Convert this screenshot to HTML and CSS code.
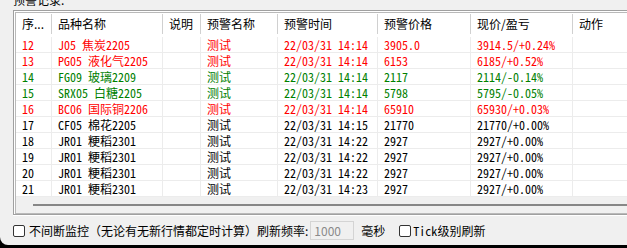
FILE: index.html
```html
<!DOCTYPE html>
<html lang="zh-CN">
<head>
<meta charset="UTF-8">
<title>预警记录</title>
<link rel="stylesheet" href="styles.css">
</head>
<body>
<div class="window">
  <div class="caption">预警记录:</div>
  <div class="group">
    <div class="list">
      <div class="row head">
        <div>序...</div><div>品种名称</div><div>说明</div><div>预警名称</div><div>预警时间</div><div>预警价格</div><div>现价/盈亏</div><div>动作</div>
      </div>
      <div class="row red">
        <div>12</div><div>J05 焦炭2205</div><div></div><div>测试</div><div>22/03/31 14:14</div><div>3905.0</div><div>3914.5/+0.24%</div><div></div>
      </div>
      <div class="row red">
        <div>13</div><div>PG05 液化气2205</div><div></div><div>测试</div><div>22/03/31 14:14</div><div>6153</div><div>6185/+0.52%</div><div></div>
      </div>
      <div class="row green">
        <div>14</div><div>FG09 玻璃2209</div><div></div><div>测试</div><div>22/03/31 14:14</div><div>2117</div><div>2114/-0.14%</div><div></div>
      </div>
      <div class="row green">
        <div>15</div><div>SRX05 白糖2205</div><div></div><div>测试</div><div>22/03/31 14:14</div><div>5798</div><div>5795/-0.05%</div><div></div>
      </div>
      <div class="row red">
        <div>16</div><div>BC06 国际铜2206</div><div></div><div>测试</div><div>22/03/31 14:14</div><div>65910</div><div>65930/+0.03%</div><div></div>
      </div>
      <div class="row">
        <div>17</div><div>CF05 棉花2205</div><div></div><div>测试</div><div>22/03/31 14:15</div><div>21770</div><div>21770/+0.00%</div><div></div>
      </div>
      <div class="row">
        <div>18</div><div>JR01 粳稻2301</div><div></div><div>测试</div><div>22/03/31 14:22</div><div>2927</div><div>2927/+0.00%</div><div></div>
      </div>
      <div class="row">
        <div>19</div><div>JR01 粳稻2301</div><div></div><div>测试</div><div>22/03/31 14:22</div><div>2927</div><div>2927/+0.00%</div><div></div>
      </div>
      <div class="row">
        <div>20</div><div>JR01 粳稻2301</div><div></div><div>测试</div><div>22/03/31 14:22</div><div>2927</div><div>2927/+0.00%</div><div></div>
      </div>
      <div class="row">
        <div>21</div><div>JR01 粳稻2301</div><div></div><div>测试</div><div>22/03/31 14:23</div><div>2927</div><div>2927/+0.00%</div><div></div>
      </div>
      <div class="hscroll"><div class="thumb"></div></div>
    </div>
  </div>
  <div class="controls">
    <span class="check"></span>
    <span>不间断监控（无论有无新行情都定时计算）刷新频率:</span>
    <span class="rate">1000</span>
    <span class="unit">毫秒</span>
    <span class="check check2"></span>
    <span><span class="mono">Tick</span>级别刷新</span>
  </div>
</div>
</body>
</html>
```

FILE: styles.css
```css
body {
  margin: 0;
  background: #000;
  font-family: "Noto Sans CJK SC", sans-serif;
  font-size: 12px;
  color: #000;
}
.window {
  height: 245px;
  background: #f0f0f0;
  border-bottom-left-radius: 8px;
  overflow: hidden;
}
.caption {
  height: 16px;
  line-height: 16px;
  margin: -8px 0 2px 13px;
}
.group {
  margin-left: 13px;
  border: 1px solid #a0a0a0;
  border-right: 0;
  box-shadow: inset 1px 1px #fff, 0 1px #fff;
}
.list {
  margin: 1px 0 0 1px;
  border: 1px solid #b9b9b9;
  border-right: 0;
  background: #fff;
  overflow: hidden;
}
.row {
  display: grid;
  grid-template-columns: 36px 111px 38px 77px 100px 93px 102px 120px;
  height: 16px;
  box-sizing: border-box;
  border-bottom: 1px solid #ececec;
  line-height: 15px;
  white-space: nowrap;
  font-family: "Noto Sans Mono CJK SC", "Noto Sans CJK SC", monospace;
}
.row > div {
  border-right: 1px solid #ececec;
  padding-left: 6px;
  overflow: hidden;
}
.red { color: #ff0000; }
.green { color: #008000; }
.head {
  height: 24px;
  border-bottom: 0;
  line-height: 21px;
  font-family: "Noto Sans CJK SC", sans-serif;
}
.head > div {
  position: relative;
  border-right: 0;
}
.row.head > div {
  border-right: 0;
}
.head > div::after {
  content: "";
  position: absolute;
  right: 0;
  top: 1px;
  height: 20px;
  width: 1px;
  background: #d0d0d0;
}
.hscroll {
  height: 16px;
  padding-top: 7px;
  box-sizing: border-box;
  background: #f0f0f0;
}
.thumb {
  margin-left: 17px;
  height: 2px;
  background: #878787;
}
.controls {
  display: flex;
  align-items: center;
  height: 29px;
  margin-top: 1px;
  white-space: nowrap;
}
.check {
  width: 12px;
  height: 12px;
  box-sizing: border-box;
  border: 1px solid #333;
  border-radius: 2px;
  background: #fff;
  margin: 0 4px 0 13px;
}
.check2 {
  margin: 0 2px 0 14px;
}
.rate {
  width: 44px;
  height: 19px;
  box-sizing: border-box;
  border: 1px solid #d4d4d4;
  padding-left: 3px;
  margin-left: 2px;
  line-height: 17px;
  color: #8a8a8a;
}
.unit {
  margin-left: 7px;
}
.mono {
  font-family: "Noto Sans Mono CJK SC", "DejaVu Sans Mono", monospace;
}
```
